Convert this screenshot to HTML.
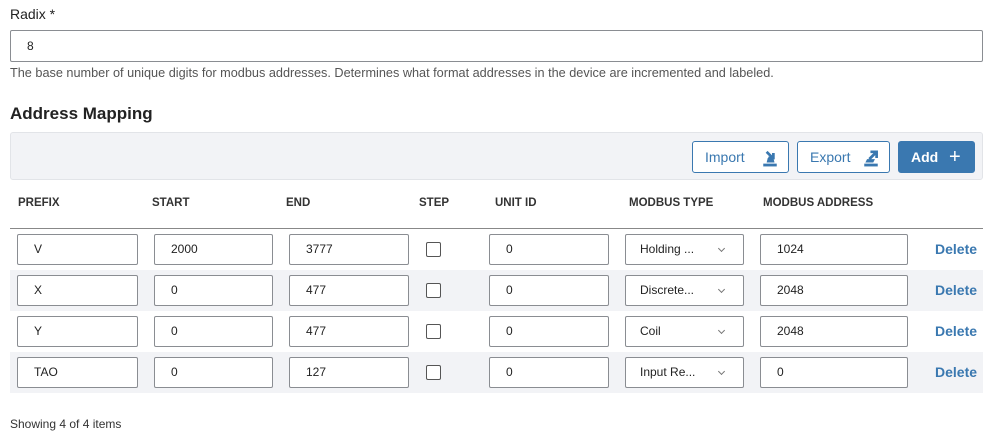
<!DOCTYPE html>
<html><head><style>
*{box-sizing:border-box;margin:0;padding:0}
body{width:1000px;height:442px;background:#fff;font-family:"Liberation Sans","DejaVu Sans",sans-serif;color:#222;position:relative;overflow:hidden}
.a{position:absolute}
.inp{position:absolute;height:31px;border:1px solid #8a8d92;border-radius:2px;background:#fff;font-size:12px;padding-left:16px;line-height:29px;color:#222}
.th{position:absolute;top:197px;font-size:11.5px;font-weight:bold;color:#333}
.cb{position:absolute;width:15px;height:15px;border:1px solid #555;border-radius:2px;background:#fff}
.del{position:absolute;left:935px;font-size:14px;font-weight:bold;color:#3a78b0}
.row{position:absolute;left:10px;width:973px;height:41px}
.btn{position:absolute;top:141px;height:32px;border:1px solid #3a78b0;border-radius:3px;color:#3a78b0;font-size:14px;line-height:30px;padding-left:12px;background:#fff}
.sel{padding-left:14px}
.sel:after{content:"";position:absolute;right:19px;top:11px;width:4px;height:4px;border-right:1px solid #777;border-bottom:1px solid #777;transform:rotate(45deg)}
</style></head><body>
<div class="a" style="left:10px;top:6px;font-size:14px;color:#222">Radix *</div>
<div class="inp" style="left:10px;top:30px;width:973px;height:32px;line-height:30px">8</div>
<div class="a" style="left:10px;top:66px;font-size:12.7px;color:#555">The base number of unique digits for modbus addresses. Determines what format addresses in the device are incremented and labeled.</div>
<div class="a" style="left:10px;top:104px;font-size:17px;font-weight:bold;color:#222">Address Mapping</div>
<div class="a" style="left:10px;top:132px;width:973px;height:48px;background:#f2f3f6;border:1px solid #e2e4e8;border-radius:3px"></div>
<div class="btn" style="left:692px;width:97px">Import
<svg class="a" style="left:68px;top:7px" width="18" height="18" viewBox="0 0 16 16"><path d="M2 13h12v2.5H2z" fill="#3a78b0"/><path d="M5 12h7l-1-4H6z" fill="#3a78b0"/><path d="M5 2.5l5 5M11 3.5v4.5H6.5" stroke="#3a78b0" stroke-width="2.4" fill="none"/></svg></div>
<div class="btn" style="left:797px;width:93px">Export
<svg class="a" style="left:64px;top:7px" width="18" height="18" viewBox="0 0 16 16"><path d="M2 13h12v2.5H2z" fill="#3a78b0"/><path d="M3 12h7l1.5-3H4.5z" fill="#3a78b0"/><path d="M6.5 9l6-6M7.5 2.5H13V8" stroke="#3a78b0" stroke-width="2.4" fill="none"/></svg></div>
<div class="btn" style="left:898px;width:77px;background:#3a78b0;color:#fff;font-weight:bold">Add<span class="a" style="left:50px;top:0;font-size:20px;font-weight:normal">+</span></div>
<div class="th" style="left:18px">PREFIX</div>
<div class="th" style="left:152px">START</div>
<div class="th" style="left:286px">END</div>
<div class="th" style="left:419px">STEP</div>
<div class="th" style="left:495px">UNIT ID</div>
<div class="th" style="left:629px">MODBUS TYPE</div>
<div class="th" style="left:763px">MODBUS ADDRESS</div>
<div class="a" style="left:10px;top:228px;width:973px;height:1px;background:#888"></div>
<div class="row" style="top:270px;background:#f2f3f6"></div>
<div class="row" style="top:352px;background:#f2f3f6"></div>

<div class="inp" style="left:17px;top:234px;width:121px">V</div>
<div class="inp" style="left:154px;top:234px;width:119px">2000</div>
<div class="inp" style="left:289px;top:234px;width:120px">3777</div>
<div class="cb" style="left:426px;top:242px"></div>
<div class="inp" style="left:489px;top:234px;width:120px">0</div>
<div class="inp sel" style="left:625px;top:234px;width:119px">Holding ...</div>
<div class="inp" style="left:760px;top:234px;width:148px">1024</div>
<div class="del" style="top:241px">Delete</div>

<div class="inp" style="left:17px;top:275px;width:121px">X</div>
<div class="inp" style="left:154px;top:275px;width:119px">0</div>
<div class="inp" style="left:289px;top:275px;width:120px">477</div>
<div class="cb" style="left:426px;top:283px"></div>
<div class="inp" style="left:489px;top:275px;width:120px">0</div>
<div class="inp sel" style="left:625px;top:275px;width:119px">Discrete...</div>
<div class="inp" style="left:760px;top:275px;width:148px">2048</div>
<div class="del" style="top:282px">Delete</div>

<div class="inp" style="left:17px;top:316px;width:121px">Y</div>
<div class="inp" style="left:154px;top:316px;width:119px">0</div>
<div class="inp" style="left:289px;top:316px;width:120px">477</div>
<div class="cb" style="left:426px;top:324px"></div>
<div class="inp" style="left:489px;top:316px;width:120px">0</div>
<div class="inp sel" style="left:625px;top:316px;width:119px">Coil</div>
<div class="inp" style="left:760px;top:316px;width:148px">2048</div>
<div class="del" style="top:323px">Delete</div>

<div class="inp" style="left:17px;top:357px;width:121px">TAO</div>
<div class="inp" style="left:154px;top:357px;width:119px">0</div>
<div class="inp" style="left:289px;top:357px;width:120px">127</div>
<div class="cb" style="left:426px;top:365px"></div>
<div class="inp" style="left:489px;top:357px;width:120px">0</div>
<div class="inp sel" style="left:625px;top:357px;width:119px">Input Re...</div>
<div class="inp" style="left:760px;top:357px;width:148px">0</div>
<div class="del" style="top:364px">Delete</div>

<div class="a" style="left:10px;top:417px;font-size:12px;color:#333">Showing 4 of 4 items</div>
</body></html>
